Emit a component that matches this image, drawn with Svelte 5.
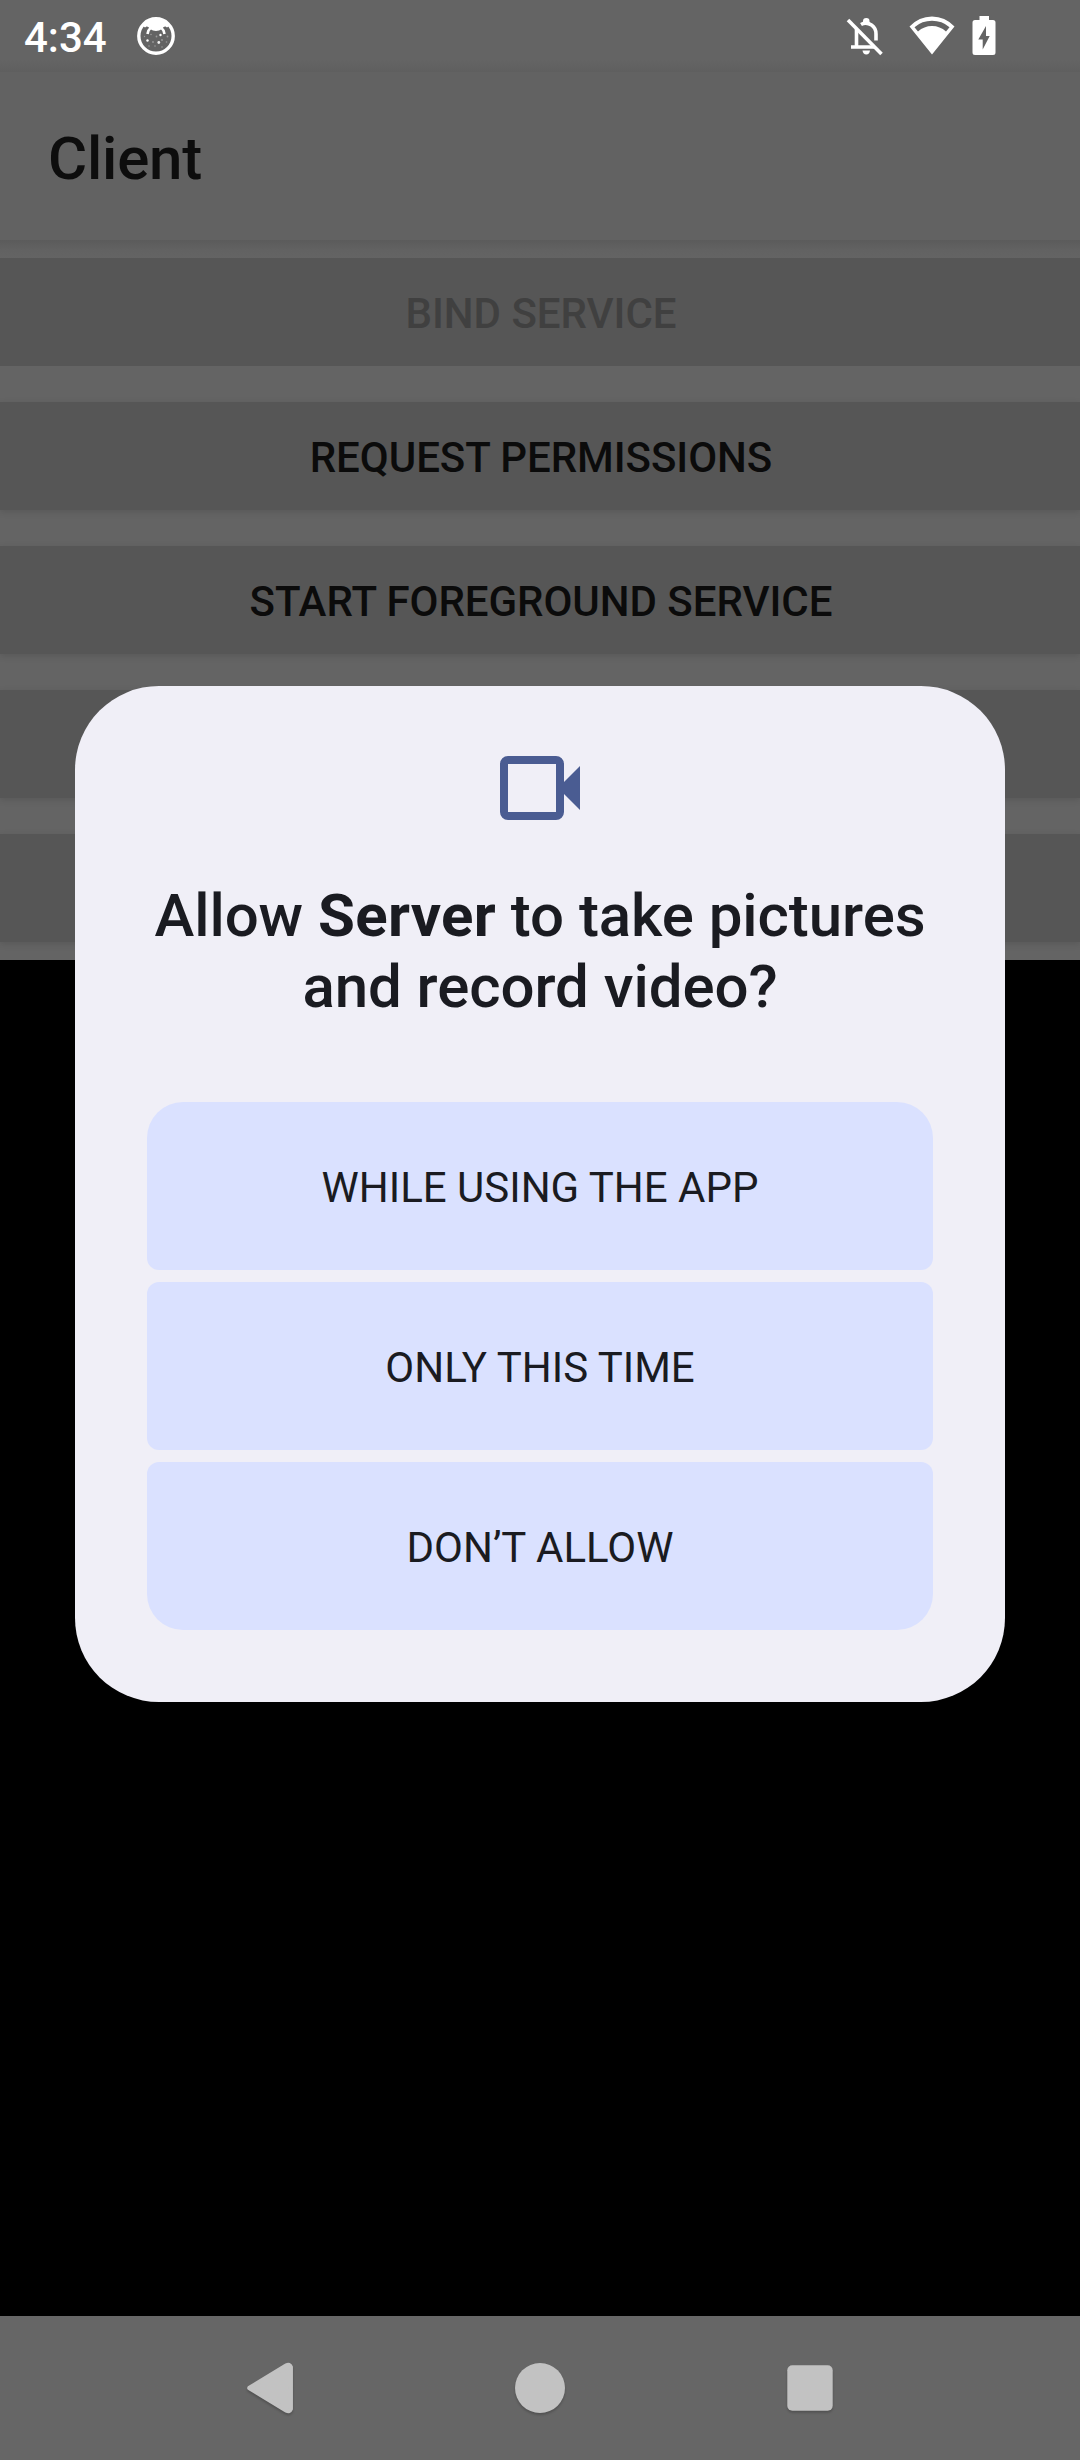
<script>
  const actions = [
    { label: 'Bind service', disabled: true },
    { label: 'Request permissions' },
    { label: 'Start foreground service' },
    { label: '' },
    { label: '' }
  ];
  const choices = ['While using the app', 'Only this time', 'Don’t allow'];
</script>

<div class="screen">
  <header class="status">
    <span class="clock">4:34</span>
    <svg class="face" width="40" height="40" viewBox="0 0 40 40">
      <circle cx="20" cy="20" r="17.2" fill="none" stroke="#fff" stroke-width="3.4" />
      <path d="M7 10Q13 2.500 20 2.500T33 10L31 11.500L29.500 10.500Q27.500 10 26 13Q20 17 14 13Q12.500 10 10.500 10.500L9 11.500Z" fill="#fff" />
      <path d="M14.500 12Q12 14 11.500 18M25.500 12Q28 14 28.500 18" fill="none" stroke="#fff" stroke-width="2.600" />
      <g fill="#999">
        <circle cx="11.500" cy="24.500" r="1.200" fill="#fff" />
        <circle cx="24.500" cy="19" r="1.200" fill="#fff" />
        <circle cx="22.800" cy="26.500" r="1.400" fill="#eee" />
        <circle cx="15" cy="18.500" r=".8" /><circle cx="20.500" cy="20.500" r=".9" />
        <circle cx="26" cy="24" r=".9" /><circle cx="17" cy="26" r=".9" />
        <circle cx="30.500" cy="26" r=".8" /><circle cx="31.500" cy="20.500" r=".9" />
        <circle cx="13" cy="30" r=".8" /><circle cx="19" cy="30" r=".8" />
        <circle cx="26" cy="31" r=".8" /><circle cx="8.500" cy="20.500" r=".7" />
      </g>
    </svg>
    <span class="spacer"></span>
    <svg class="bell" width="38" height="40" viewBox="0 0 38 40">
      <path d="M2 4L35.500 38" stroke="#fff" stroke-width="3.600" />
      <path d="M10.500 13V30M5 31H29M15 8.500Q20 5.500 25.500 9Q30 12 30 18V24.500" fill="none" stroke="#fff" stroke-width="3.600" />
      <path d="M17 6.500V5Q17 2 20.300 2T23.500 5V7.500Z" fill="#fff" />
      <path d="M16.500 34.500H24Q23.500 38.500 20.300 38.500T16.500 34.500Z" fill="#fff" />
    </svg>
    <svg class="wifi" width="46" height="40" viewBox="0 0 46 40">
      <path fill="#fff" fill-rule="evenodd" d="M.5 10.500Q10 .5 23 .5T45.500 10.500L23 38.500ZM5.500 11.200L9 15.500Q15 10 23 10T37 15.500L40.500 11.200Q33 4.800 23 4.800T5.500 11.200Z" />
    </svg>
    <svg class="battery" width="24" height="40" viewBox="0 0 24 40">
      <path fill="#fff" fill-rule="evenodd" d="M7.500 0H17V4H21Q23.500 4 23.500 6.500V36.500Q23.500 39 21 39H3Q.5 39 .5 36.500V6.500Q.5 4 3 4H7.500ZM14 10L6.300 23.500H10.700V33.500L17.700 20H14Z" />
    </svg>
  </header>

  <div class="appbar"><h1>Client</h1></div>

  <main class="actions">
    {#each actions as action}
      <button class="action" class:disabled={action.disabled} disabled={action.disabled}>{action.label}</button>
    {/each}
  </main>

  <div class="void"></div>

  <nav class="nav">
    <svg width="60" height="60" viewBox="0 0 60 60"><path d="M9.500 30L46.500 7.500Q49.500 6 50.700 9V51Q49.500 54 46.500 52.500Z" fill="#c2c2c2" stroke="#c2c2c2" stroke-width="4.500" stroke-linejoin="round" /></svg>
    <svg width="60" height="60" viewBox="0 0 60 60"><circle cx="30" cy="30" r="25" fill="#c2c2c2" /></svg>
    <svg width="60" height="60" viewBox="0 0 60 60"><rect x="7.300" y="7.300" width="45.400" height="45.400" rx="5" fill="#c2c2c2" /></svg>
  </nav>

  <div class="dialog" role="dialog" aria-modal="true">
    <svg class="camera" width="96" height="96" viewBox="0 0 96 96">
      <rect x="12" y="20" width="56" height="56" rx="4" fill="none" stroke="#4a5c92" stroke-width="8" />
      <path d="M70 44L88 26V70L70 52Z" fill="#4a5c92" />
    </svg>
    <h2>
      <span class="line"><span>Allow&nbsp;</span><b>Server</b><span>&nbsp;to take pictures</span></span>
      <span class="line">and record video?</span>
    </h2>
    <div class="choices">
      {#each choices as choice}
        <button class="choice">{choice}</button>
      {/each}
    </div>
  </div>
</div>

<style>
  :global(body) { margin: 0; background: #000; }
  .screen {
    position: relative;
    display: grid;
    grid-template-rows: 72px 168px 720px 1fr 144px;
    width: 1080px;
    height: 2460px;
    background: #000;
    font-family: Roboto, sans-serif;
  }
  button {
    box-sizing: border-box;
    border: 0;
    margin: 0;
    padding: 4px 0 0;
    font-family: inherit;
    font-size: 42px;
    line-height: 50px;
    text-transform: uppercase;
  }
  h1, h2 { margin: 0; font-size: 60px; font-weight: 500; }
  .status {
    display: flex;
    align-items: flex-start;
    box-sizing: border-box;
    padding: 16px 84px 0 24px;
    background: linear-gradient(#646464 60px, #5f5f5f);
    color: #fff;
  }
  .clock { width: 112px; font-size: 42px; font-weight: 500; line-height: 43px; }
  .spacer { flex: 1; }
  .bell { margin-right: 25px; }
  .wifi { margin-right: 17px; }
  .appbar {
    display: flex;
    align-items: center;
    padding: 0 48px;
    background: #626262;
    color: #0d0d0d;
  }
  .appbar h1 { line-height: 71px; padding-top: 5px; letter-spacing: -0.2px; }
  .actions {
    display: flex;
    flex-direction: column;
    gap: 36px;
    box-sizing: border-box;
    padding-top: 18px;
    background: linear-gradient(#5b5b5b, #626262 10px, #646464 20px);
    overflow: hidden;
  }
  .action {
    flex: none;
    height: 108px;
    padding-left: 2px;
    background: #565656;
    color: #0b0b0b;
    font-weight: 500;
    letter-spacing: -0.04px;
    box-shadow: 0 2px 7px rgba(0, 0, 0, 0.12);
  }
  .action.disabled { color: #404040; box-shadow: none; }
  .nav {
    display: flex;
    align-items: center;
    justify-content: center;
    gap: 210px;
    background: #666;
  }
  .nav svg { filter: drop-shadow(0 2px 1px rgba(0, 0, 0, 0.2)); }
  .dialog {
    position: absolute;
    top: 686px;
    left: 75px;
    display: flex;
    flex-direction: column;
    align-items: center;
    box-sizing: border-box;
    width: 930px;
    height: 1016px;
    padding: 54px 72px 72px;
    border-radius: 84px;
    background: #f0eff7;
    color: #1a1b21;
  }
  .camera { display: block; }
  h2 { margin-top: 44px; line-height: 71px; letter-spacing: -0.06px; }
  .line { display: flex; justify-content: center; white-space: nowrap; }
  h2 b { font-weight: 700; letter-spacing: 0.3px; }
  .choices {
    display: flex;
    flex-direction: column;
    gap: 12px;
    width: 100%;
    margin-top: auto;
  }
  .choice {
    height: 168px;
    border-radius: 12px;
    background: #dae1ff;
    color: #1a1b21;
    font-weight: 400;
  }
  .choice:first-child { border-radius: 36px 36px 12px 12px; }
  .choice:last-child { border-radius: 12px 12px 36px 36px; }
</style>
